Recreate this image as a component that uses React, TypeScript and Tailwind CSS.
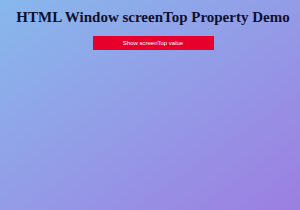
export default function App() {
  return (
    <div className="min-h-screen w-full pl-[6px] bg-linear-to-br from-[#86b8ec] to-[#9b7ee1] flex flex-col items-center">
      <h1 className="mt-[8px] whitespace-nowrap text-[15px] leading-[18px] font-bold text-[#0d1030] font-['Liberation_Serif',serif]">
        HTML Window screenTop Property Demo
      </h1>
      <button className="mt-[10px] w-[121px] h-[14px] bg-[#e8002c] text-white text-[6px] font-['Liberation_Sans',sans-serif] flex items-center justify-center">
        Show screenTop value
      </button>
    </div>
  );
}
